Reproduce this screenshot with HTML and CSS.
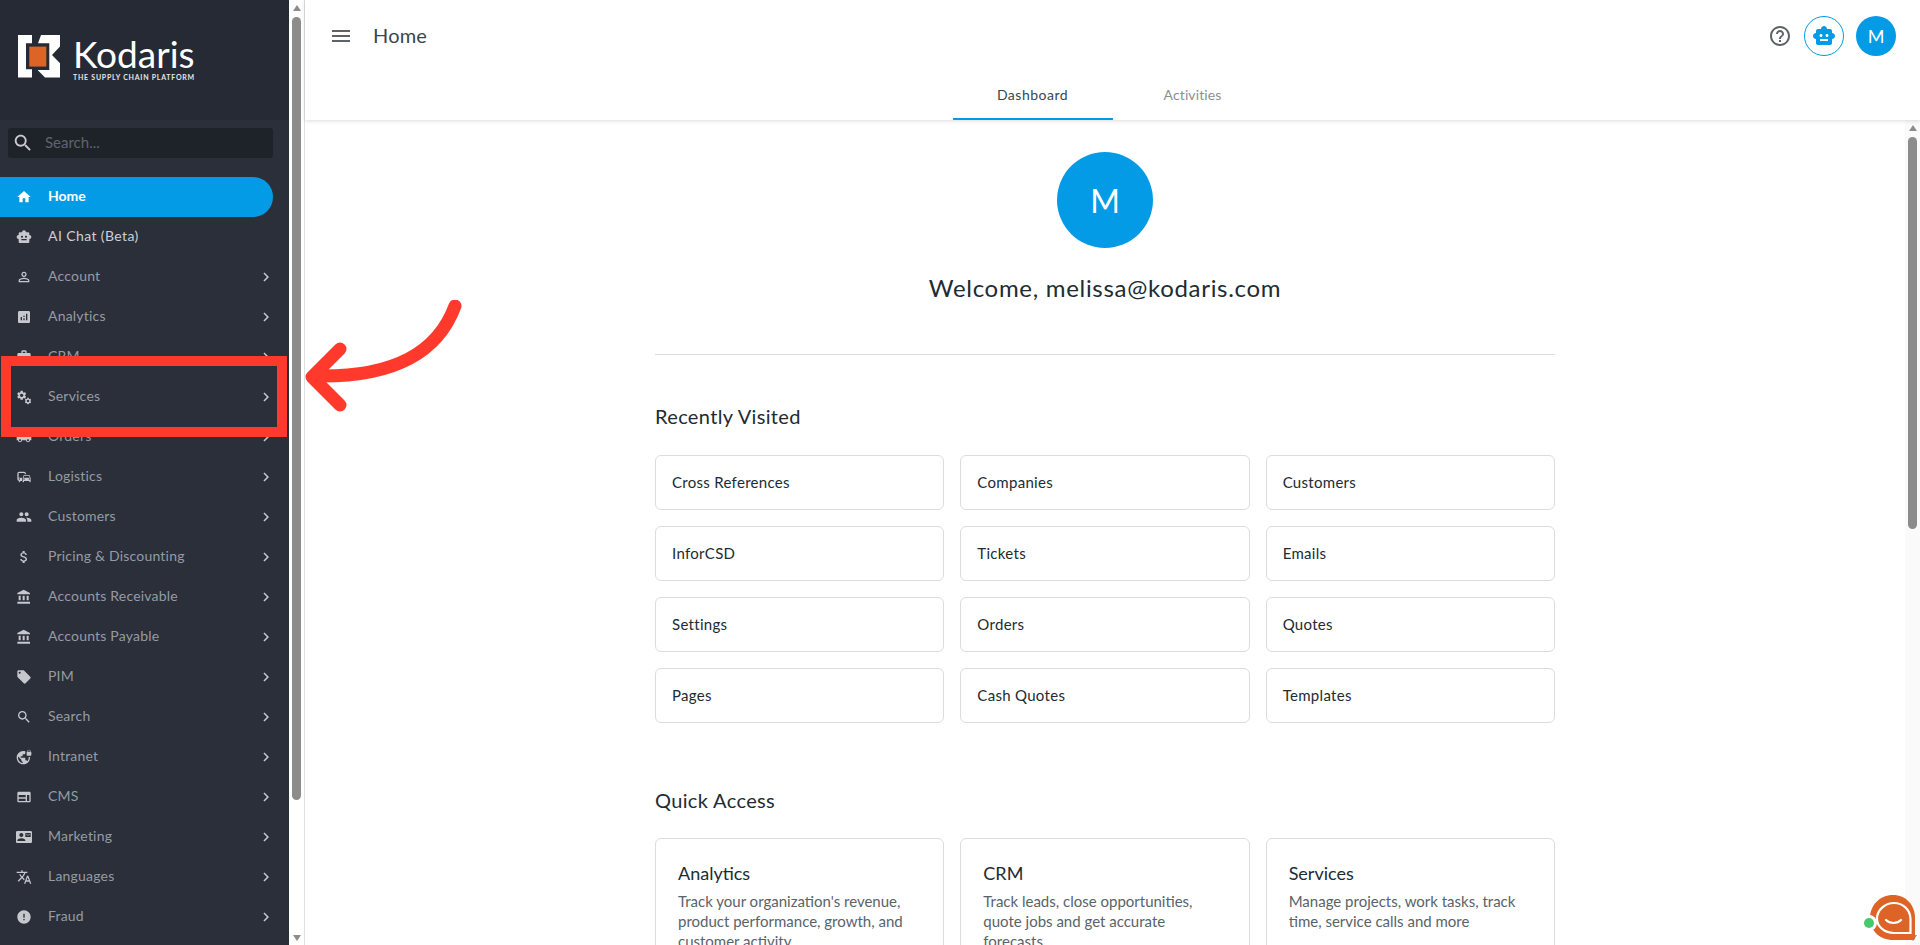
FILE: index.html
```html
<!DOCTYPE html>
<html lang="en">
<head>
    <meta charset="UTF-8">
    <meta name="viewport" content="width=device-width, initial-scale=1.0">
    <title>Home</title>
    <link rel="stylesheet" href="styles.css">
</head>
<body>
    <!-- icon set -->
    <svg class="icon-defs" aria-hidden="true">
        <symbol id="i-home" viewBox="0 0 24 24"><path d="M10 20v-6h4v6h5v-8h3L12 3 2 12h3v8z"/></symbol>
        <symbol id="i-robot" viewBox="0 0 24 24"><path fill-rule="evenodd" d="M20 9V7c0-1.1-.9-2-2-2h-3c0-1.66-1.34-3-3-3S9 3.34 9 5H6c-1.1 0-2 .9-2 2v2c-1.66 0-3 1.34-3 3s1.34 3 3 3v4c0 1.1.9 2 2 2h12c1.1 0 2-.9 2-2v-4c1.66 0 3-1.34 3-3s-1.34-3-3-3zM7.5 11.5c0-.83.67-1.5 1.5-1.5s1.5.67 1.5 1.5S9.83 13 9 13s-1.5-.67-1.5-1.5zM16 17H8v-2h8v2zm-1-4c-.83 0-1.5-.67-1.5-1.5S14.17 10 15 10s1.5.67 1.5 1.5S15.83 13 15 13z"/></symbol>
        <symbol id="i-person" viewBox="0 0 24 24"><path d="M12 5.9c1.16 0 2.1.94 2.1 2.1s-.94 2.1-2.1 2.1S9.9 9.16 9.9 8s.94-2.1 2.1-2.1m0 9c2.97 0 6.1 1.46 6.1 2.1v1.1H5.9V17c0-.64 3.13-2.1 6.1-2.1M12 4C9.79 4 8 5.79 8 8s1.79 4 4 4 4-1.79 4-4-1.79-4-4-4zm0 9c-2.67 0-8 1.34-8 4v3h16v-3c0-2.66-5.33-4-8-4z"/></symbol>
        <symbol id="i-analytics" viewBox="0 0 24 24"><path d="M19 3H5c-1.1 0-2 .9-2 2v14c0 1.1.9 2 2 2h14c1.1 0 2-.9 2-2V5c0-1.1-.9-2-2-2zM9 17H7v-5h2v5zm4 0h-2v-3h2v3zm0-5h-2v-2h2v2zm4 5h-2V7h2v10z"/></symbol>
        <symbol id="i-work" viewBox="0 0 24 24"><path d="M20 6h-4V4c0-1.11-.89-2-2-2h-4c-1.11 0-2 .89-2 2v2H4c-1.11 0-1.99.89-1.99 2L2 19c0 1.11.89 2 2 2h16c1.11 0 2-.89 2-2V8c0-1.11-.89-2-2-2zm-6 0h-4V4h4v2z"/></symbol>
        <symbol id="i-gear" viewBox="0 0 24 24"><path d="M19.14 12.94c.04-.3.06-.61.06-.94 0-.32-.02-.64-.07-.94l2.03-1.58c.18-.14.23-.41.12-.61l-1.92-3.32c-.12-.22-.37-.29-.59-.22l-2.39.96c-.5-.38-1.03-.7-1.62-.94l-.36-2.54c-.04-.24-.24-.41-.48-.41h-3.84c-.24 0-.43.17-.47.41l-.36 2.54c-.59.24-1.13.57-1.62.94l-2.39-.96c-.22-.08-.47 0-.59.22L2.74 8.87c-.12.21-.08.47.12.61l2.03 1.58c-.05.3-.09.63-.09.94s.02.64.07.94l-2.03 1.58c-.18.14-.23.41-.12.61l1.92 3.32c.12.22.37.29.59.22l2.39-.96c.5.38 1.03.7 1.62.94l.36 2.54c.05.24.24.41.48.41h3.84c.24 0 .44-.17.47-.41l.36-2.54c.59-.24 1.13-.56 1.62-.94l2.39.96c.22.08.47 0 .59-.22l1.92-3.32c.12-.22.07-.47-.12-.61l-2.01-1.58zM12 15.6c-1.98 0-3.6-1.62-3.6-3.6s1.62-3.6 3.6-3.6 3.6 1.62 3.6 3.6-1.62 3.6-3.6 3.6z"/></symbol>
        <symbol id="i-services" viewBox="0 0 24 24">
            <svg x="0" y="1" width="17" height="17" viewBox="0 0 24 24"><use href="#i-gear"/></svg>
            <svg x="12" y="12" width="12" height="12" viewBox="0 0 24 24"><use href="#i-gear"/></svg>
        </symbol>
        <symbol id="i-truck" viewBox="0 0 24 24"><path d="M20 8h-3V4H3c-1.1 0-2 .9-2 2v11h2c0 1.66 1.34 3 3 3s3-1.34 3-3h6c0 1.66 1.34 3 3 3s3-1.34 3-3h2v-5l-3-4zM6 18.5c-.83 0-1.5-.67-1.5-1.5s.67-1.5 1.5-1.5 1.5.67 1.5 1.5-.67 1.5-1.5 1.5zm13.5-9l1.96 2.5H17V9.5h2.5zm-1.5 9c-.83 0-1.5-.67-1.5-1.5s.67-1.5 1.5-1.5 1.5.67 1.5 1.5-.67 1.5-1.5 1.5z"/></symbol>
        <symbol id="i-commute" viewBox="0 0 24 24"><path d="M12 4H5C3.34 4 2 5.34 2 7v8c0 1.66 1.34 3 3 3l-1 1v1h1l2-2h2v-5H4V6h9v2h2V7c0-1.66-1.34-3-3-3zM5 14c.55 0 1 .45 1 1s-.45 1-1 1-1-.45-1-1 .45-1 1-1zm15.57-4.34c-.14-.4-.52-.66-.97-.66h-7.19c-.46 0-.83.26-.98.66L10 13.77l.01 5.51c0 .38.31.72.69.72h.62c.38 0 .68-.38.68-.76V18h8v1.24c0 .38.31.76.69.76h.61c.38 0 .69-.34.69-.72l.01-1.37v-4.14l-1.43-4.07zm-8.16.34h7.19l1.03 3h-9.25l1.03-3zM12 16c-.55 0-1-.45-1-1s.45-1 1-1 1 .45 1 1-.45 1-1 1zm8 0c-.55 0-1-.45-1-1s.45-1 1-1 1 .45 1 1-.45 1-1 1z"/></symbol>
        <symbol id="i-people" viewBox="0 0 24 24"><path d="M16 11c1.66 0 2.99-1.34 2.99-3S17.66 5 16 5c-1.66 0-3 1.34-3 3s1.34 3 3 3zm-8 0c1.66 0 2.99-1.34 2.99-3S9.66 5 8 5C6.34 5 5 6.34 5 8s1.34 3 3 3zm0 2c-2.33 0-7 1.17-7 3.5V19h14v-2.5c0-2.33-4.67-3.5-7-3.5zm8 0c-.29 0-.62.02-.97.05 1.16.84 1.97 1.97 1.97 3.45V19h6v-2.5c0-2.33-4.67-3.5-7-3.5z"/></symbol>
        <symbol id="i-money" viewBox="0 0 24 24"><path d="M11.8 10.9c-2.27-.59-3-1.2-3-2.15 0-1.09 1.01-1.85 2.7-1.85 1.78 0 2.44.85 2.5 2.1h2.21c-.07-1.72-1.12-3.3-3.21-3.81V3h-3v2.16c-1.94.42-3.5 1.68-3.5 3.61 0 2.31 1.91 3.46 4.7 4.13 2.5.6 3 1.48 3 2.41 0 .69-.49 1.79-2.7 1.79-2.06 0-2.87-.92-2.98-2.1h-2.2c.12 2.19 1.76 3.42 3.68 3.83V21h3v-2.15c1.95-.37 3.5-1.5 3.5-3.55 0-2.84-2.43-3.81-4.7-4.4z"/></symbol>
        <symbol id="i-bank" viewBox="0 0 24 24"><path d="M4 10v7h3v-7H4zm6 0v7h3v-7h-3zM2 22h19v-3H2v3zm14-12v7h3v-7h-3zm-4.5-9L2 6v2h19V6l-9.5-5z"/></symbol>
        <symbol id="i-tag" viewBox="0 0 24 24"><path d="M21.41 11.58l-9-9C12.05 2.22 11.55 2 11 2H4c-1.1 0-2 .9-2 2v7c0 .55.22 1.05.59 1.42l9 9c.36.36.86.58 1.41.58.55 0 1.05-.22 1.41-.59l7-7c.37-.36.59-.86.59-1.41 0-.55-.23-1.06-.59-1.42zM5.5 7C4.67 7 4 6.33 4 5.5S4.67 4 5.5 4 7 4.67 7 5.5 6.33 7 5.5 7z"/></symbol>
        <symbol id="i-search" viewBox="0 0 24 24"><path d="M15.5 14h-.79l-.28-.27C15.41 12.59 16 11.11 16 9.5 16 5.91 13.09 3 9.5 3S3 5.91 3 9.5 5.91 16 9.5 16c1.61 0 3.09-.59 4.23-1.57l.27.28v.79l5 4.99L20.49 19l-4.99-5zm-6 0C7.01 14 5 11.99 5 9.5S7.01 5 9.5 5 14 7.01 14 9.5 11.99 14 9.5 14z"/></symbol>
        <symbol id="i-vpn" viewBox="0 0 24 24"><path d="M22 4v-.5C22 2.12 20.88 1 19.5 1S17 2.12 17 3.5V4c-.55 0-1 .45-1 1v4c0 .55.45 1 1 1h5c.55 0 1-.45 1-1V5c0-.55-.45-1-1-1zm-.8 0h-3.4v-.5c0-.94.76-1.7 1.7-1.7s1.7.76 1.7 1.7V4zm-2.28 8c.04.33.08.66.08 1 0 2.08-.8 3.97-2.1 5.39-.26-.81-1-1.39-1.9-1.39h-1v-3c0-.55-.45-1-1-1H7v-2h2c.55 0 1-.45 1-1V8h2c1.1 0 2-.9 2-2V3.46c-.95-.3-1.95-.46-3-.46C5.48 3 1 7.48 1 13s4.48 10 10 10 10-4.48 10-10c0-.34-.02-.67-.05-1h-2.03zM10 20.93c-3.95-.49-7-3.85-7-7.93 0-.62.08-1.21.21-1.79L8 16v1c0 1.1.9 2 2 2v1.93z"/></symbol>
        <symbol id="i-web" viewBox="0 0 24 24"><path d="M20 4H4c-1.1 0-1.99.9-1.99 2L2 18c0 1.1.9 2 2 2h16c1.1 0 2-.9 2-2V6c0-1.1-.9-2-2-2zM4 9h10.5v3.5H4V9zm0 5.5h10.5V18H4v-3.5zM20 18h-3.5V9H20v9z"/></symbol>
        <symbol id="i-contact" viewBox="0 0 24 24"><path d="M21 8V7l-3 2-3-2v1l3 2 3-2zm1-5H2C.9 3 0 3.9 0 5v14c0 1.1.9 2 2 2h20c1.1 0 1.99-.9 1.99-2L24 5c0-1.1-.9-2-2-2zM8 6c1.66 0 3 1.34 3 3s-1.34 3-3 3-3-1.34-3-3 1.34-3 3-3zm6 12H2v-1c0-2 4-3.1 6-3.1s6 1.1 6 3.1v1zm8-6h-8V6h8v6z"/></symbol>
        <symbol id="i-translate" viewBox="0 0 24 24"><path d="M12.87 15.07l-2.54-2.51.03-.03c1.74-1.94 2.98-4.17 3.71-6.53H17V4h-7V2H8v2H1v1.99h11.17C11.5 7.92 10.44 9.75 9 11.35 8.07 10.32 7.3 9.19 6.69 8h-2c.73 1.63 1.73 3.17 2.98 4.56l-5.09 5.02L4 19l5-5 3.11 3.11.76-2.04zM18.5 10h-2L12 22h2l1.12-3h4.75L21 22h2l-4.5-12zm-2.62 7l1.62-4.33L19.12 17h-3.24z"/></symbol>
        <symbol id="i-error" viewBox="0 0 24 24"><path d="M12 2C6.48 2 2 6.48 2 12s4.48 10 10 10 10-4.48 10-10S17.52 2 12 2zm1 15h-2v-2h2v2zm0-4h-2V7h2v6z"/></symbol>
        <symbol id="i-chevron" viewBox="0 0 24 24"><path d="M10 6L8.59 7.41 13.17 12l-4.58 4.59L10 18l6-6z"/></symbol>
        <symbol id="i-menu" viewBox="0 0 24 24"><path d="M3 18h18v-2H3v2zm0-5h18v-2H3v2zm0-7v2h18V6H3z"/></symbol>
        <symbol id="i-help" viewBox="0 0 24 24"><path d="M11 18h2v-2h-2v2zm1-16C6.48 2 2 6.48 2 12s4.48 10 10 10 10-4.48 10-10S17.52 2 12 2zm0 18c-4.41 0-8-3.59-8-8s3.59-8 8-8 8 3.59 8 8-3.59 8-8 8zm0-14c-2.21 0-4 1.79-4 4h2c0-1.1.9-2 2-2s2 .9 2 2c0 2-3 1.75-3 5h2c0-2.25 3-2.5 3-5 0-2.21-1.79-4-4-4z"/></symbol>
    </svg>

    <div class="app">
        <aside class="sidebar">
            <div class="logo">
                <svg class="logo-mark" viewBox="0 0 42 43">
                    <path fill="#fff" d="M0 0h14v8.3H8v26h6v8.3H0z"/>
                    <path fill="#fff" d="M23 0h19v11.6L34 20l8 8.3v14.3H27L19.6 35h11.7V8.3H20z"/>
                    <rect x="11.3" y="11.6" width="17" height="20" fill="#dd6326"/>
                </svg>
                <div class="logo-text">
                    <span class="logo-name">Kodaris</span>
                    <span class="logo-tag">THE SUPPLY CHAIN PLATFORM</span>
                </div>
            </div>
            <div class="side-search">
                <svg class="side-search-icon"><use href="#i-search"/></svg>
                <span>Search...</span>
            </div>
            <nav class="nav">
                <a class="nav-item active"><svg class="nav-icon"><use href="#i-home"/></svg><span>Home</span></a>
                <a class="nav-item bright"><svg class="nav-icon"><use href="#i-robot"/></svg><span>AI Chat (Beta)</span></a>
                <a class="nav-item"><svg class="nav-icon"><use href="#i-person"/></svg><span>Account</span><svg class="nav-arrow"><use href="#i-chevron"/></svg></a>
                <a class="nav-item"><svg class="nav-icon"><use href="#i-analytics"/></svg><span>Analytics</span><svg class="nav-arrow"><use href="#i-chevron"/></svg></a>
                <a class="nav-item"><svg class="nav-icon"><use href="#i-work"/></svg><span>CRM</span><svg class="nav-arrow"><use href="#i-chevron"/></svg></a>
                <a class="nav-item"><svg class="nav-icon"><use href="#i-services"/></svg><span>Services</span><svg class="nav-arrow"><use href="#i-chevron"/></svg></a>
                <a class="nav-item"><svg class="nav-icon"><use href="#i-truck"/></svg><span>Orders</span><svg class="nav-arrow"><use href="#i-chevron"/></svg></a>
                <a class="nav-item"><svg class="nav-icon"><use href="#i-commute"/></svg><span>Logistics</span><svg class="nav-arrow"><use href="#i-chevron"/></svg></a>
                <a class="nav-item"><svg class="nav-icon"><use href="#i-people"/></svg><span>Customers</span><svg class="nav-arrow"><use href="#i-chevron"/></svg></a>
                <a class="nav-item"><svg class="nav-icon"><use href="#i-money"/></svg><span>Pricing &amp; Discounting</span><svg class="nav-arrow"><use href="#i-chevron"/></svg></a>
                <a class="nav-item"><svg class="nav-icon"><use href="#i-bank"/></svg><span>Accounts Receivable</span><svg class="nav-arrow"><use href="#i-chevron"/></svg></a>
                <a class="nav-item"><svg class="nav-icon"><use href="#i-bank"/></svg><span>Accounts Payable</span><svg class="nav-arrow"><use href="#i-chevron"/></svg></a>
                <a class="nav-item"><svg class="nav-icon"><use href="#i-tag"/></svg><span>PIM</span><svg class="nav-arrow"><use href="#i-chevron"/></svg></a>
                <a class="nav-item"><svg class="nav-icon"><use href="#i-search"/></svg><span>Search</span><svg class="nav-arrow"><use href="#i-chevron"/></svg></a>
                <a class="nav-item"><svg class="nav-icon"><use href="#i-vpn"/></svg><span>Intranet</span><svg class="nav-arrow"><use href="#i-chevron"/></svg></a>
                <a class="nav-item"><svg class="nav-icon"><use href="#i-web"/></svg><span>CMS</span><svg class="nav-arrow"><use href="#i-chevron"/></svg></a>
                <a class="nav-item"><svg class="nav-icon"><use href="#i-contact"/></svg><span>Marketing</span><svg class="nav-arrow"><use href="#i-chevron"/></svg></a>
                <a class="nav-item"><svg class="nav-icon"><use href="#i-translate"/></svg><span>Languages</span><svg class="nav-arrow"><use href="#i-chevron"/></svg></a>
                <a class="nav-item"><svg class="nav-icon"><use href="#i-error"/></svg><span>Fraud</span><svg class="nav-arrow"><use href="#i-chevron"/></svg></a>
            </nav>
        </aside>

        <div class="scrollbar scrollbar-side">
            <i class="sb-up"></i>
            <i class="sb-thumb"></i>
            <i class="sb-down"></i>
        </div>

        <div class="main">
            <header class="topbar">
                <div class="topbar-row">
                    <svg class="menu-icon"><use href="#i-menu"/></svg>
                    <span class="page-title">Home</span>
                    <div class="topbar-actions">
                        <svg class="help-icon"><use href="#i-help"/></svg>
                        <div class="robot-btn"><svg><use href="#i-robot"/></svg></div>
                        <div class="avatar-small">M</div>
                    </div>
                </div>
                <div class="tabs">
                    <a class="tab tab-active">Dashboard</a>
                    <a class="tab">Activities</a>
                </div>
            </header>

            <div class="body">
                <div class="content">
                    <div class="avatar-big">M</div>
                    <h1 class="welcome">Welcome, melissa@kodaris.com</h1>
                    <hr class="divider">

                    <h2 class="section-title">Recently Visited</h2>
                    <div class="link-grid">
                        <a class="link-card">Cross References</a>
                        <a class="link-card">Companies</a>
                        <a class="link-card">Customers</a>
                        <a class="link-card">InforCSD</a>
                        <a class="link-card">Tickets</a>
                        <a class="link-card">Emails</a>
                        <a class="link-card">Settings</a>
                        <a class="link-card">Orders</a>
                        <a class="link-card">Quotes</a>
                        <a class="link-card">Pages</a>
                        <a class="link-card">Cash Quotes</a>
                        <a class="link-card">Templates</a>
                    </div>

                    <h2 class="section-title quick-title">Quick Access</h2>
                    <div class="quick-grid">
                        <div class="quick-card">
                            <h3>Analytics</h3>
                            <p>Track your organization's revenue, product performance, growth, and customer activity</p>
                        </div>
                        <div class="quick-card">
                            <h3>CRM</h3>
                            <p>Track leads, close opportunities, quote jobs and get accurate forecasts</p>
                        </div>
                        <div class="quick-card">
                            <h3>Services</h3>
                            <p>Manage projects, work tasks, track time, service calls and more</p>
                        </div>
                    </div>
                </div>

                <div class="scrollbar scrollbar-main">
                    <i class="sb-up"></i>
                    <i class="sb-thumb"></i>
                    <i class="sb-down"></i>
                </div>
            </div>
        </div>
    </div>

    <!-- annotation over the page -->
    <div class="callout-box"></div>
    <svg class="callout-arrow" viewBox="0 0 170 120">
        <path d="M155 6C138 52 95 78 14 76M40 49L12 77l28 28"/>
    </svg>

    <!-- chat bubble -->
    <div class="chat-widget">
        <svg viewBox="0 0 46 46">
            <path fill="#dd6326" d="M23 0C10 0 0 10 0 23s10 22 23 22h20c1 0 2-1 2-2V23C45 10 36 0 23 0z"/>
            <path fill="none" stroke="#fff" stroke-width="2.2" d="M24 8C15 8 7 15 7 23.5S15 38 24 38h16.5V24C40.5 15 33 8 24 8z"/>
            <path fill="none" stroke="#fff" stroke-width="2.2" stroke-linecap="round" d="M16 25c4 4 11 4 15 0"/>
        </svg>
        <span class="chat-dot"></span>
    </div>
</body>
</html>
```

FILE: styles.css
```css
* {
    box-sizing: border-box;
}
html, body {
    margin: 0;
    height: 100%;
    overflow: hidden;
}
body {
    font-family: "Lato", "Open Sans", Arial, sans-serif;
    color: #212b33;
    background: #fff;
}
a {
    text-decoration: none;
    color: inherit;
}
.icon-defs {
    display: none;
}
.app {
    display: flex;
    height: 945px;
}

/* sidebar */
.sidebar {
    width: 289px;
    flex: none;
    background: #2a2f3a;
    overflow: hidden;
}
.logo {
    height: 120px;
    background: #252a34;
    display: flex;
    align-items: flex-start;
    gap: 13px;
    padding: 35px 0 0 18px;
}
.logo-mark {
    width: 42px;
    height: 43px;
    flex: none;
}
.logo-text {
    display: flex;
    flex-direction: column;
    color: #fff;
}
.logo-name {
    font-size: 37px;
    line-height: 38px;
}
.logo-tag {
    font-size: 7px;
    line-height: 8px;
    font-weight: 700;
    letter-spacing: 0.75px;
    white-space: nowrap;
    color: #e6e6e6;
}
.side-search {
    display: flex;
    align-items: center;
    height: 30px;
    margin: 8px 16px 19px 8px;
    background: #1e2229;
    border-radius: 3px;
    padding: 0 0 2px 4px;
    font-size: 15px;
    color: #5e646d;
}
.side-search-icon {
    width: 22px;
    height: 22px;
    fill: #c9ccd1;
    margin: 2px 11px 0 0;
}
.nav-item {
    display: flex;
    align-items: center;
    height: 40px;
    width: 273px;
    padding-left: 16px;
    font-size: 14px;
    letter-spacing: 0.2px;
    color: #969ba3;
    white-space: nowrap;
}
.nav-item span {
    margin-bottom: 3px;
}
.nav-icon {
    width: 16px;
    height: 16px;
    fill: #c5c8cd;
    flex: none;
    margin-right: 16px;
}
.nav-arrow {
    width: 18px;
    height: 18px;
    fill: #c5c8cd;
    margin-left: auto;
    margin-right: -2px;
}
.nav-item.active {
    background: #039be5;
    color: #fff;
    font-weight: 700;
    letter-spacing: 0;
    border-radius: 0 20px 20px 0;
}
.nav-item.active .nav-icon {
    fill: #fff;
}
.nav-item.bright {
    color: #cdd0d4;
    letter-spacing: 0.4px;
}

/* fake scrollbars */
.scrollbar {
    width: 15px;
    flex: none;
    display: flex;
    flex-direction: column;
    align-items: center;
    padding-top: 5px;
}
.scrollbar-side {
    width: 16px;
    background: #fff;
    border-right: 1px solid #e0e0e0;
    height: 945px;
}
.scrollbar-main {
    background: #fafafa;
}
.sb-up {
    width: 0;
    height: 0;
    border-left: 4.5px solid transparent;
    border-right: 4.5px solid transparent;
    border-bottom: 6px solid #8c8c8c;
}
.sb-thumb {
    display: block;
    width: 9px;
    background: #8c8c8c;
    border-radius: 5px;
    margin-top: 6px;
}
.scrollbar-side .sb-thumb {
    height: 783px;
}
.scrollbar-main .sb-thumb {
    height: 392px;
}
.sb-down {
    width: 0;
    height: 0;
    margin-top: auto;
    margin-bottom: 4px;
    border-left: 4.5px solid transparent;
    border-right: 4.5px solid transparent;
    border-top: 6px solid #8c8c8c;
}

/* main area */
.main {
    flex: 1;
    min-width: 0;
    display: flex;
    flex-direction: column;
}
.topbar {
    height: 120px;
    flex: none;
    box-shadow: 0 1px 4px rgba(0, 0, 0, 0.14);
    position: relative;
}
.topbar-row {
    height: 72px;
    display: flex;
    align-items: center;
    padding: 0 24px;
}
.menu-icon {
    width: 24px;
    height: 24px;
    fill: #5f6368;
    margin-right: 20px;
}
.page-title {
    font-size: 20px;
    letter-spacing: 0.2px;
    color: #37474f;
    margin-bottom: 2px;
}
.topbar-actions {
    margin-left: auto;
    display: flex;
    align-items: center;
}
.help-icon {
    width: 24px;
    height: 24px;
    fill: #5f6368;
    margin-right: 12px;
}
.robot-btn {
    width: 40px;
    height: 40px;
    border: 1px solid #039be5;
    border-radius: 50%;
    display: flex;
    align-items: center;
    justify-content: center;
    margin-right: 12px;
}
.robot-btn svg {
    width: 24px;
    height: 24px;
    fill: #039be5;
}
.avatar-small {
    width: 40px;
    height: 40px;
    border-radius: 50%;
    background: #039be5;
    color: #fff;
    font-size: 18px;
    display: flex;
    align-items: center;
    justify-content: center;
}
.tabs {
    display: flex;
    justify-content: center;
    height: 48px;
}
.tab {
    width: 160px;
    height: 48px;
    display: flex;
    align-items: center;
    justify-content: center;
    font-size: 14px;
    letter-spacing: 0.1px;
    color: #8a9095;
    border-bottom: 2px solid transparent;
    padding-bottom: 2px;
}
.tab-active {
    color: #37474f;
    letter-spacing: 0.5px;
    border-bottom-color: #039be5;
}
.body {
    flex: 1;
    min-height: 0;
    display: flex;
}
.content {
    flex: 1;
    min-width: 0;
    overflow: hidden;
    padding: 32px 350px 0;
}
.avatar-big {
    width: 96px;
    height: 96px;
    border-radius: 50%;
    background: #039be5;
    color: #fff;
    font-size: 32px;
    display: flex;
    align-items: center;
    justify-content: center;
    margin: 0 auto;
}
.welcome {
    font-size: 24px;
    font-weight: 400;
    letter-spacing: 0.7px;
    text-align: center;
    line-height: 32px;
    margin: 24px 0 0;
}
.divider {
    border: none;
    border-top: 1px solid #dcdcdc;
    margin: 50px 0 0;
}
.section-title {
    font-size: 20px;
    font-weight: 400;
    letter-spacing: 0.35px;
    line-height: 28px;
    margin: 47px 0 0;
}
.link-grid, .quick-grid {
    display: grid;
    grid-template-columns: repeat(3, 1fr);
    gap: 16px;
    margin-top: 25px;
}
.quick-grid {
    margin-top: 24px;
}
.link-card {
    height: 55px;
    border: 1px solid #dcdcdc;
    border-radius: 6px;
    padding: 0 0 2px 16px;
    display: flex;
    align-items: center;
    font-size: 15px;
    letter-spacing: 0.3px;
}
.quick-title {
    margin-top: 63px;
}
.quick-card {
    border: 1px solid #dcdcdc;
    border-radius: 6px;
    padding: 22px 22px 0;
    height: 170px;
}
.quick-card h3 {
    font-size: 18px;
    font-weight: 400;
    line-height: 24px;
    margin: 0 0 6px;
}
.quick-card p {
    font-size: 15px;
    line-height: 20px;
    color: #59636a;
    margin: 0;
}

/* annotation */
.callout-box {
    position: absolute;
    left: 1px;
    top: 356px;
    width: 286px;
    height: 81px;
    border: 10px solid #ff3a2d;
}
.callout-arrow {
    position: absolute;
    left: 300px;
    top: 300px;
    width: 170px;
    height: 120px;
    fill: none;
    stroke: #ff3a2d;
    stroke-width: 13;
    stroke-linecap: round;
    stroke-linejoin: round;
}

/* chat */
.chat-widget {
    position: absolute;
    left: 1870px;
    top: 895px;
    width: 46px;
    height: 46px;
}
.chat-dot {
    position: absolute;
    left: -6px;
    top: 23px;
    width: 10px;
    height: 10px;
    border-radius: 50%;
    background: #47c96d;
    box-shadow: 0 0 0 3px #fff;
}
```
